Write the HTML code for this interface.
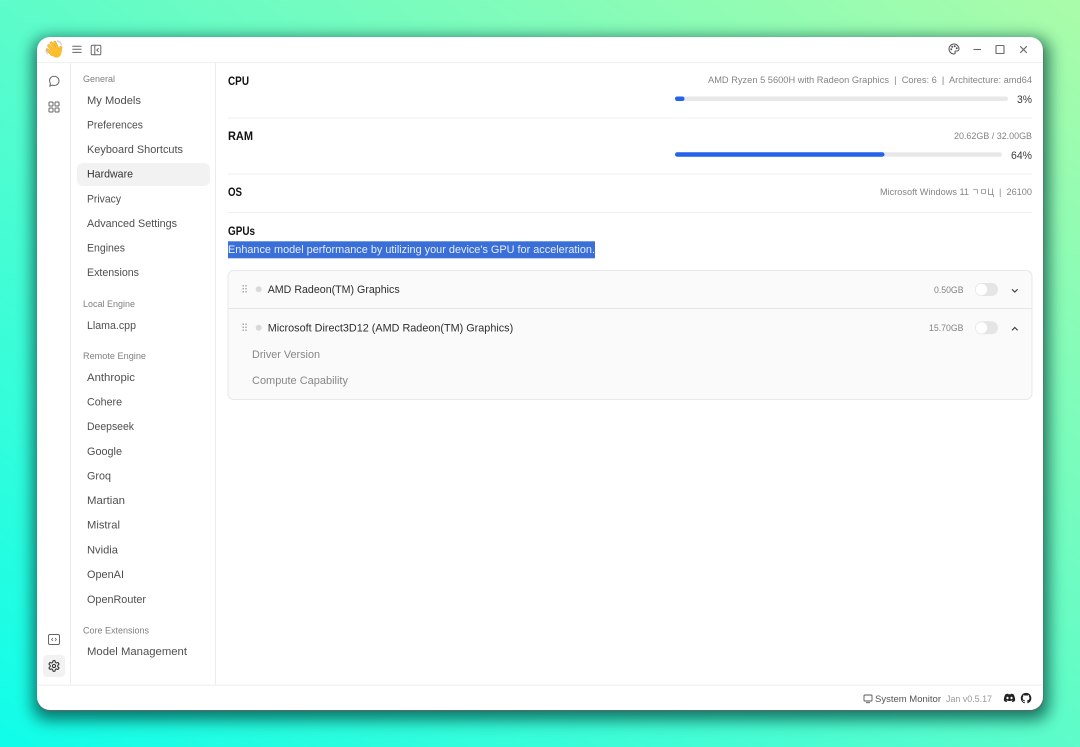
<!DOCTYPE html>
<html>
<head>
<meta charset="utf-8">
<style>
html,body{margin:0;padding:0;width:1080px;height:747px;overflow:hidden;background:linear-gradient(to bottom left,#aafca9,#10fdea)}
svg{display:block;position:absolute;left:0;top:0}
#c{filter:blur(.3px)}
text{font-family:"Liberation Sans","Noto Sans CJK SC",sans-serif;white-space:pre}
.n{font-size:11px;fill:#4f4f4f}
.l{font-size:9px;fill:#7f7f7f}
.h{font-size:11.5px;font-weight:bold;fill:#111}
.s{font-size:9.5px;fill:#848484}
.p{font-size:11px;fill:#3c3c3c}
.g{font-size:11px;fill:#2e2e2e}
.d{font-size:11px;fill:#878787}
.i{fill:none;stroke:#666;stroke-width:1;stroke-linecap:round;stroke-linejoin:round}
</style>
</head>
<body>
<svg width="1080" height="747" viewBox="0 0 1080 747" xmlns="http://www.w3.org/2000/svg">
<defs>
<filter id="sh" filterUnits="userSpaceOnUse" x="0" y="0" width="1080" height="747"><feGaussianBlur stdDeviation="8"/></filter>
</defs>
<rect x="33" y="38" width="1016" height="682" rx="14" fill="#06403a" opacity=".72" filter="url(#sh)"/>
<rect x="37" y="38" width="1006.500" height="673" rx="13" fill="#5a6a64"/>
<g id="c">
<rect x="37" y="37" width="1006" height="673" rx="13" fill="#fff"/>

<!-- structure lines -->
<rect x="37" y="62" width="1006" height="1" fill="#f0f0f0"/>
<rect x="37" y="684.500" width="1006" height="1.200" fill="#f0f0f0"/>
<rect x="70" y="63" width="1" height="622" fill="#ececec"/>
<rect x="215" y="63" width="1" height="622" fill="#ececec"/>

<!-- hand -->
<g fill="none" stroke-linecap="round">
<path d="M46.800 48.500q-1.200 2.800 .4 5" stroke="#c9d4e6" stroke-width="1.500"/>
<path d="M57.500 41q3 .8 3.800 3.800" stroke="#c9d4e6" stroke-width="1.500"/>
<g stroke="#e79a12" stroke-width="2.900">
<path d="M47.800 50L52 54.500"/><path d="M48.800 45.700L54 52"/><path d="M51.300 43L56 50"/><path d="M54.800 42.300L58 49.500"/><path d="M60.800 47.500L60 52"/>
</g>
<ellipse cx="56.500" cy="53" rx="4.800" ry="4.600" fill="#fdbd2b" stroke="none"/>
<g stroke="#fdc12e" stroke-width="2.100">
<path d="M47.800 50L52 54.500"/><path d="M48.800 45.700L54 52"/><path d="M51.300 43L56 50"/><path d="M54.800 42.300L58 49.500"/><path d="M60.800 47.500L60 52"/>
</g>
</g>

<!-- menu + panel -->
<path class="i" d="M72.700 46.200H81.200M72.700 49.300H81.200M72.700 52.400H81.200" stroke-width="1.100"/>
<rect class="i" x="91.200" y="45.200" width="9.600" height="9.600" rx="1.200"/>
<path class="i" d="M94.800 45.200V54.800M98.300 48.500L96.800 50L98.300 51.500"/>

<!-- window controls -->
<g transform="translate(948,43) scale(.5)" fill="none" stroke="#555" stroke-width="2" stroke-linecap="round" stroke-linejoin="round">
<path d="M12 22a10 10 0 1 1 10-10c0 2.500-2 4-4 4h-2.500a1.800 1.800 0 0 0-1.300 3c.6.700.3 3-2.200 3z"/>
<circle cx="13.500" cy="6.500" r="1" fill="#555"/><circle cx="17.500" cy="10.500" r="1" fill="#555"/><circle cx="8.500" cy="7.500" r="1" fill="#555"/><circle cx="6.500" cy="12.500" r="1" fill="#555"/>
</g>
<path d="M973.500 49.500H981" stroke="#666" stroke-width="1.100" fill="none"/>
<rect x="996" y="45.500" width="8" height="8" rx=".8" fill="none" stroke="#666" stroke-width="1.100"/>
<path d="M1020.200 46.300L1026.800 52.900M1026.800 46.300L1020.200 52.900" stroke="#666" stroke-width="1.100" fill="none"/>

<!-- left rail icons -->
<path class="i" d="M49.700 86.200L50.500 83.700C49.800 82.500 49.500 81.500 49.500 80.800C49.500 78 51.500 76.300 54.200 76.300C56.800 76.300 59 78.200 59 80.900C59 83.600 56.800 85.500 54.200 85.500C53.400 85.500 52.700 85.300 52.200 85.100Z"/>
<rect class="i" x="49" y="102" width="4" height="4" rx=".8"/><rect class="i" x="55" y="102" width="4" height="4" rx=".8"/>
<rect class="i" x="49" y="108" width="4" height="4" rx=".8"/><rect class="i" x="55" y="108" width="4" height="4" rx=".8"/>
<rect class="i" x="48.500" y="634.500" width="11" height="10" rx="1.500"/>
<path d="M53 638L51.600 639.500L53 641M55 638L56.400 639.500L55 641" fill="none" stroke="#666" stroke-width=".8"/>
<rect x="43" y="655" width="22" height="22" rx="4" fill="#f2f2f2"/>
<g transform="translate(47.500,659.500) scale(.54)" fill="none" stroke="#333" stroke-width="2" stroke-linecap="round" stroke-linejoin="round">
<path d="M12.220 2h-.44a2 2 0 0 0-2 2v.18a2 2 0 0 1-1 1.730l-.43.250a2 2 0 0 1-2 0l-.15-.08a2 2 0 0 0-2.730.730l-.22.380a2 2 0 0 0 .730 2.730l.15.100a2 2 0 0 1 1 1.720v.510a2 2 0 0 1-1 1.740l-.15.090a2 2 0 0 0-.730 2.730l.22.380a2 2 0 0 0 2.730.730l.15-.08a2 2 0 0 1 2 0l.43.250a2 2 0 0 1 1 1.730V20a2 2 0 0 0 2 2h.44a2 2 0 0 0 2-2v-.18a2 2 0 0 1 1-1.730l.43-.25a2 2 0 0 1 2 0l.15.08a2 2 0 0 0 2.730-.73l.22-.39a2 2 0 0 0-.73-2.730l-.15-.08a2 2 0 0 1-1-1.740v-.5a2 2 0 0 1 1-1.740l.15-.09a2 2 0 0 0 .73-2.730l-.22-.38a2 2 0 0 0-2.730-.73l-.15.08a2 2 0 0 1-2 0l-.43-.25a2 2 0 0 1-1-1.730V4a2 2 0 0 0-2-2z"/>
<circle cx="12" cy="12" r="3"/>
</g>

<!-- sidebar -->
<rect x="77" y="163" width="133" height="23" rx="6" fill="#f2f2f2"/>
<text class="l" x="83" y="82" textLength="32" lengthAdjust="spacingAndGlyphs">General</text>
<text class="n" x="87" y="104" textLength="54" lengthAdjust="spacingAndGlyphs">My Models</text>
<text class="n" x="87" y="128.500" textLength="56" lengthAdjust="spacingAndGlyphs">Preferences</text>
<text class="n" x="87" y="153" textLength="96" lengthAdjust="spacingAndGlyphs">Keyboard Shortcuts</text>
<text class="n" x="87" y="177.500" textLength="46" lengthAdjust="spacingAndGlyphs" style="fill:#333">Hardware</text>
<text class="n" x="87" y="202.500" textLength="34" lengthAdjust="spacingAndGlyphs">Privacy</text>
<text class="n" x="87" y="227" textLength="90" lengthAdjust="spacingAndGlyphs">Advanced Settings</text>
<text class="n" x="87" y="251.500" textLength="38" lengthAdjust="spacingAndGlyphs">Engines</text>
<text class="n" x="87" y="276" textLength="52" lengthAdjust="spacingAndGlyphs">Extensions</text>
<text class="l" x="83" y="307" textLength="52" lengthAdjust="spacingAndGlyphs">Local Engine</text>
<text class="n" x="87" y="329" textLength="49" lengthAdjust="spacingAndGlyphs">Llama.cpp</text>
<text class="l" x="83" y="359" textLength="63" lengthAdjust="spacingAndGlyphs">Remote Engine</text>
<text class="n" x="87" y="381" textLength="48" lengthAdjust="spacingAndGlyphs">Anthropic</text>
<text class="n" x="87" y="405.500" textLength="35" lengthAdjust="spacingAndGlyphs">Cohere</text>
<text class="n" x="87" y="430" textLength="47" lengthAdjust="spacingAndGlyphs">Deepseek</text>
<text class="n" x="87" y="455" textLength="35" lengthAdjust="spacingAndGlyphs">Google</text>
<text class="n" x="87" y="479.500" textLength="24" lengthAdjust="spacingAndGlyphs">Groq</text>
<text class="n" x="87" y="504" textLength="38" lengthAdjust="spacingAndGlyphs">Martian</text>
<text class="n" x="87" y="528.500" textLength="33" lengthAdjust="spacingAndGlyphs">Mistral</text>
<text class="n" x="87" y="553.500" textLength="31" lengthAdjust="spacingAndGlyphs">Nvidia</text>
<text class="n" x="87" y="578" textLength="37" lengthAdjust="spacingAndGlyphs">OpenAI</text>
<text class="n" x="87" y="603" textLength="59" lengthAdjust="spacingAndGlyphs">OpenRouter</text>
<text class="l" x="83" y="633.500" textLength="66" lengthAdjust="spacingAndGlyphs">Core Extensions</text>
<text class="n" x="87" y="655" textLength="100" lengthAdjust="spacingAndGlyphs">Model Management</text>

<!-- main -->
<text class="h" x="228" y="85" textLength="21" lengthAdjust="spacingAndGlyphs">CPU</text>
<text class="s" x="708" y="83" textLength="324" lengthAdjust="spacingAndGlyphs">AMD Ryzen 5 5600H with Radeon Graphics  |  Cores: 6  |  Architecture: amd64</text>
<rect x="675" y="96.500" width="333" height="4.500" rx="2.200" fill="#e8e8e8"/>
<rect x="675" y="96.500" width="9.500" height="4.500" rx="2.200" fill="#2563eb"/>
<text class="p" x="1017" y="103" textLength="15" lengthAdjust="spacingAndGlyphs">3%</text>
<rect x="228" y="117.500" width="804" height="1" fill="#efefef"/>

<text class="h" x="228" y="140" textLength="25" lengthAdjust="spacingAndGlyphs">RAM</text>
<text class="s" x="954" y="139" textLength="78" lengthAdjust="spacingAndGlyphs">20.62GB / 32.00GB</text>
<rect x="675" y="152.200" width="327" height="4.500" rx="2.200" fill="#e8e8e8"/>
<rect x="675" y="152.200" width="209.500" height="4.500" rx="2.200" fill="#2563eb"/>
<text class="p" x="1011" y="159" textLength="21" lengthAdjust="spacingAndGlyphs">64%</text>
<rect x="228" y="173.500" width="804" height="1" fill="#efefef"/>

<text class="h" x="228" y="196" textLength="14" lengthAdjust="spacingAndGlyphs">OS</text>
<text class="s" x="880" y="195" textLength="152" lengthAdjust="spacingAndGlyphs">Microsoft Windows 11 <tspan style="font-size:9px">ㄱㅁЦ</tspan>  |  26100</text>
<rect x="228" y="212" width="804" height="1" fill="#efefef"/>

<text class="h" x="228" y="235" textLength="27" lengthAdjust="spacingAndGlyphs">GPUs</text>
<rect x="228" y="241.300" width="367" height="17" fill="#3a6fd8"/>
<text x="228" y="253" textLength="367" lengthAdjust="spacingAndGlyphs" style="font-size:11px;fill:#e6edfb">Enhance model performance by utilizing your device's GPU for acceleration.</text>

<!-- GPU card -->
<rect x="228" y="270.500" width="804" height="129" rx="6" fill="#fafafa" stroke="#e8e8e8"/>
<rect x="228" y="308" width="804" height="1" fill="#e6e6e6"/>
<g fill="#aaa">
<rect x="242.500" y="285" width="1.500" height="1.500"/><rect x="245.300" y="285" width="1.500" height="1.500"/>
<rect x="242.500" y="288" width="1.500" height="1.500"/><rect x="245.300" y="288" width="1.500" height="1.500"/>
<rect x="242.500" y="291" width="1.500" height="1.500"/><rect x="245.300" y="291" width="1.500" height="1.500"/>
<rect x="242.500" y="323.500" width="1.500" height="1.500"/><rect x="245.300" y="323.500" width="1.500" height="1.500"/>
<rect x="242.500" y="326.500" width="1.500" height="1.500"/><rect x="245.300" y="326.500" width="1.500" height="1.500"/>
<rect x="242.500" y="329.500" width="1.500" height="1.500"/><rect x="245.300" y="329.500" width="1.500" height="1.500"/>
</g>
<circle cx="258.700" cy="289.300" r="3" fill="#d9d9d9"/>
<circle cx="258.700" cy="327.700" r="3" fill="#d9d9d9"/>
<text class="g" x="267.700" y="293" textLength="132" lengthAdjust="spacingAndGlyphs">AMD Radeon(TM) Graphics</text>
<text class="g" x="267.700" y="331.500" textLength="245.500" lengthAdjust="spacingAndGlyphs">Microsoft Direct3D12 (AMD Radeon(TM) Graphics)</text>
<text class="d" x="252" y="358" textLength="68" lengthAdjust="spacingAndGlyphs">Driver Version</text>
<text class="d" x="252" y="384" textLength="96" lengthAdjust="spacingAndGlyphs">Compute Capability</text>
<text class="s" x="934" y="293" textLength="29.500" lengthAdjust="spacingAndGlyphs">0.50GB</text>
<text class="s" x="929" y="331" textLength="34.500" lengthAdjust="spacingAndGlyphs">15.70GB</text>
<rect x="975" y="283" width="23" height="13" rx="6.500" fill="#e5e5e5"/>
<circle cx="981.500" cy="289.500" r="5.700" fill="#fff"/>
<rect x="975" y="321.300" width="23" height="13" rx="6.500" fill="#e5e5e5"/>
<circle cx="981.500" cy="327.800" r="5.700" fill="#fff"/>
<path d="M1012 289.300L1014.800 292L1017.600 289.300" fill="none" stroke="#444" stroke-width="1.200"/>
<path d="M1012 330.300L1014.800 327.500L1017.600 330.300" fill="none" stroke="#444" stroke-width="1.200"/>

<!-- footer -->
<rect x="864" y="695" width="8" height="6" rx=".8" fill="none" stroke="#555" stroke-width=".9"/>
<path d="M866 702.700H870" stroke="#555" stroke-width=".9"/>
<text x="875" y="702" textLength="66" lengthAdjust="spacingAndGlyphs" style="font-size:9.500px;fill:#555">System Monitor</text>
<text x="946" y="702" textLength="46" lengthAdjust="spacingAndGlyphs" style="font-size:9.500px;fill:#999">Jan v0.5.17</text>
<path fill-rule="evenodd" fill="#222" d="M1005.500 694.300C1006.500 693.900 1007.300 693.700 1008 693.600L1008.300 694.200H1010.700L1011 693.600C1011.800 693.700 1012.600 693.900 1013.500 694.300C1014.700 696.200 1015.200 698.300 1015.100 700.700C1014.200 701.400 1013.300 701.800 1012.400 702.100L1011.800 701.100L1012.800 700.600L1012.500 700.400C1010.600 701.200 1008.400 701.200 1006.500 700.400L1006.200 700.600L1007.200 701.100L1006.600 702.100C1005.700 701.800 1004.800 701.400 1003.900 700.700C1003.800 698.300 1004.300 696.200 1005.500 694.300ZM1007.500 696.800A1.100 1.200 0 1 0 1007.501 699.200A1.100 1.200 0 1 0 1007.500 696.800ZM1011.500 696.800A1.100 1.200 0 1 0 1011.501 699.200A1.100 1.200 0 1 0 1011.500 696.800Z"/>
<g transform="translate(1020.800,692.800) scale(.44)"><path fill="#222" d="M12 .297c-6.630 0-12 5.373-12 12 0 5.303 3.438 9.800 8.205 11.385.6.113.82-.258.82-.577 0-.285-.01-1.040-.015-2.040-3.338.724-4.042-1.610-4.042-1.610C4.422 18.070 3.633 17.700 3.633 17.700c-1.087-.744.084-.729.084-.729 1.205.084 1.838 1.236 1.838 1.236 1.070 1.835 2.809 1.305 3.495.998.108-.776.417-1.305.76-1.605-2.665-.3-5.466-1.332-5.466-5.930 0-1.310.465-2.380 1.235-3.220-.135-.303-.54-1.523.105-3.176 0 0 1.005-.322 3.300 1.230.96-.267 1.980-.399 3-.405 1.020.006 2.040.138 3 .405 2.280-1.552 3.285-1.230 3.285-1.230.645 1.653.24 2.873.12 3.176.765.84 1.230 1.910 1.230 3.220 0 4.610-2.805 5.625-5.475 5.920.42.36.81 1.096.81 2.220 0 1.606-.015 2.896-.015 3.286 0 .315.21.69.825.57C20.565 22.092 24 17.592 24 12.297c0-6.627-5.373-12-12-12"/></g>
</g>
</svg>
</body>
</html>
